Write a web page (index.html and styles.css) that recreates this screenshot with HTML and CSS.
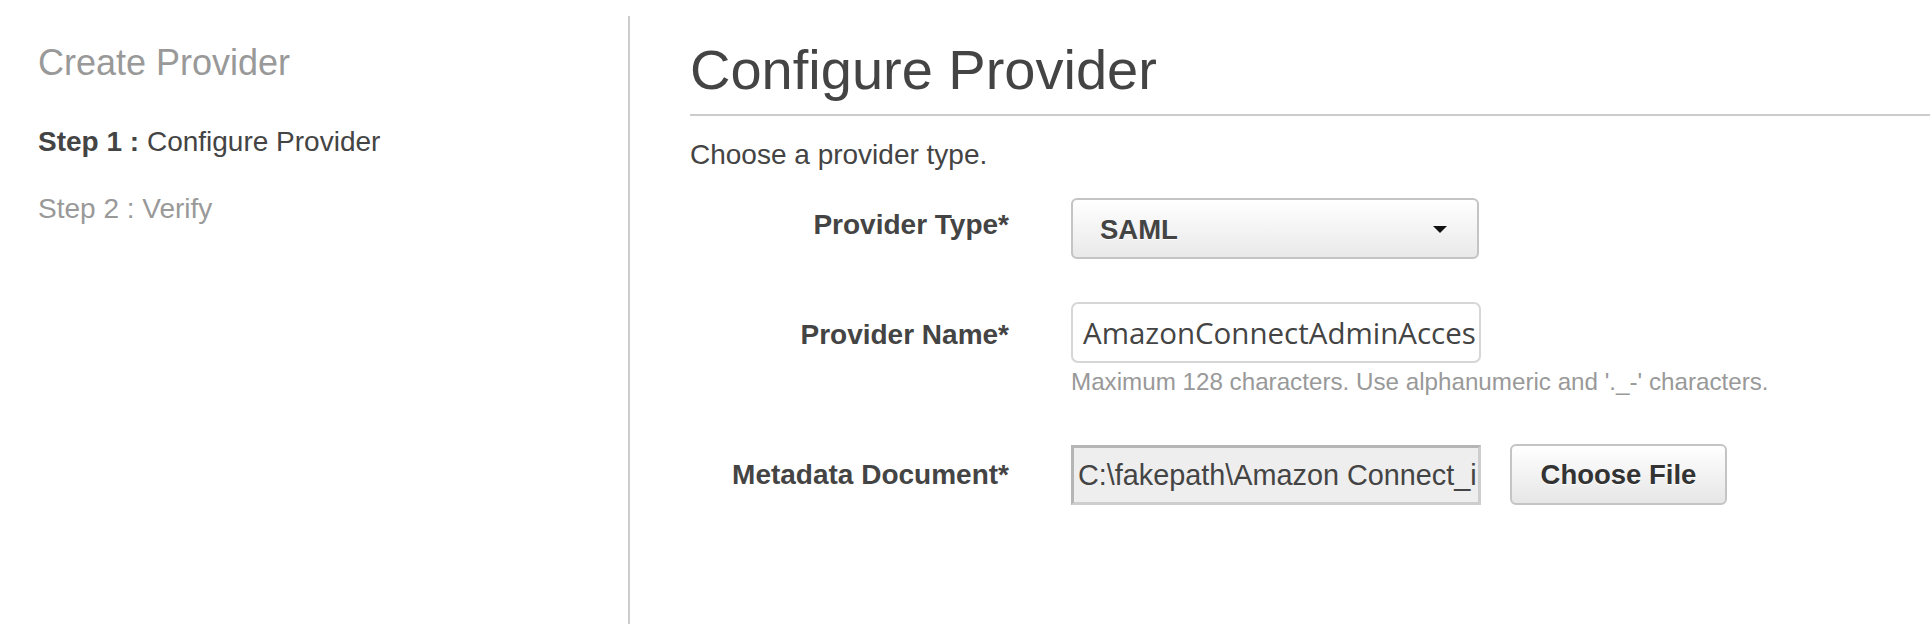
FILE: index.html
```html
<!DOCTYPE html>
<html lang="en">
<head>
<meta charset="utf-8">
<title>Create Provider</title>
<link rel="stylesheet" href="styles.css">
</head>
<body>
<div class="page">
  <aside class="sidebar">
    <h2 class="sidebar-title">Create Provider</h2>
    <div class="step step-active"><b>Step 1 :</b> Configure Provider</div>
    <div class="step step-idle">Step 2 : Verify</div>
  </aside>
  <main class="main">
    <h1 class="heading">Configure Provider</h1>
    <p class="intro">Choose a provider type.</p>
    <div class="form">
      <div class="row row-type">
        <div class="label label-type">Provider Type*</div>
        <div class="control">
          <div class="select">
            <span class="select-value">SAML</span>
            <svg class="caret" width="14" height="7" viewBox="0 0 14 7"><path d="M0 0H14L7 7Z" fill="#111"/></svg>
          </div>
        </div>
      </div>
      <div class="row row-name">
        <div class="label label-name">Provider Name*</div>
        <div class="control">
          <div class="textbox">AmazonConnectAdminAcces</div>
        </div>
      </div>
      <div class="help">Maximum 128 characters. Use alphanumeric and '._-' characters.</div>
      <div class="row row-file">
        <div class="label">Metadata Document*</div>
        <div class="control control-file">
          <div class="filebox">C:\fakepath\Amazon Connect_in</div>
          <div class="button">Choose File</div>
        </div>
      </div>
    </div>
  </main>
</div>
</body>
</html>
```

FILE: styles.css
```css
html, body {
  margin: 0;
  padding: 0;
  background: #ffffff;
}
body {
  font-family: "Liberation Sans", Arial, Helvetica, sans-serif;
  color: #444444;
}
.page {
  display: flex;
  height: 624px;
  overflow: hidden;
}
.sidebar {
  width: 590px;
  flex: none;
  padding-left: 38px;
  margin-top: 16px;
  border-right: 2px solid #cccccc;
}
.sidebar-title {
  margin: 25px 0 0 0;
  font-size: 36px;
  line-height: 44px;
  font-weight: normal;
  color: #999999;
}
.step {
  font-size: 28px;
  line-height: 36px;
}
.step-active {
  margin-top: 39px;
  color: #444444;
}
.step-idle {
  margin-top: 31px;
  color: #999999;
}
.main {
  flex: 1;
  padding-left: 60px;
  padding-top: 38px;
}
.heading {
  margin: 0;
  font-size: 56px;
  line-height: 64px;
  font-weight: normal;
  padding-bottom: 12px;
  border-bottom: 2px solid #cccccc;
}
.intro {
  margin: 21px 0 0 0;
  font-size: 28px;
  line-height: 36px;
}
.form {
  margin-top: 25px;
}
.row {
  display: flex;
  align-items: center;
}
.row-name {
  margin-top: 43px;
}
.row-file {
  margin-top: 49px;
}
.label {
  width: 319px;
  flex: none;
  text-align: right;
  font-size: 28px;
  font-weight: bold;
  line-height: 36px;
  color: #444444;
}
.label-type {
  padding-bottom: 8px;
}
.label-name {
  padding-top: 4px;
}
.control {
  margin-left: 62px;
  display: flex;
  align-items: center;
}
.select {
  box-sizing: border-box;
  width: 408px;
  height: 61px;
  border: 2px solid #c4c4c4;
  border-radius: 6px;
  background: linear-gradient(#ffffff, #e9e9e9);
  display: flex;
  align-items: center;
  justify-content: space-between;
  padding: 2px 30px 0 27px;
}
.select-value {
  font-size: 27.5px;
  font-weight: bold;
  color: #444444;
  text-shadow: 0 1px 0 #ffffff;
}
.caret {
  display: block;
}
.textbox {
  box-sizing: border-box;
  width: 410px;
  height: 61px;
  border: 2px solid #d6d6d6;
  border-radius: 7px;
  background: #ffffff;
  padding: 0 0 0 10px;
  font-family: "Open Sans", "Liberation Sans", sans-serif;
  font-size: 29.5px;
  line-height: 57px;
  white-space: nowrap;
  overflow: hidden;
  color: #444444;
}
.help {
  margin: 6px 0 0 381px;
  font-size: 24.2px;
  line-height: 26px;
  color: #999999;
}
.filebox {
  box-sizing: border-box;
  width: 410px;
  height: 60px;
  border: 3px solid #b5b5b5;
  border-bottom-color: #cdcdcd;
  border-right-color: #cdcdcd;
  background: #eeeeee;
  padding-left: 4px;
  font-size: 28.8px;
  line-height: 54px;
  white-space: nowrap;
  overflow: hidden;
  color: #444444;
}
.button {
  box-sizing: border-box;
  margin-left: 29px;
  width: 217px;
  height: 61px;
  border: 2px solid #c4c4c4;
  border-radius: 6px;
  background: linear-gradient(#ffffff, #e6e6e6);
  font-size: 27.5px;
  font-weight: bold;
  line-height: 57px;
  text-align: center;
  color: #333333;
  text-shadow: 0 1px 0 #ffffff;
}
```
